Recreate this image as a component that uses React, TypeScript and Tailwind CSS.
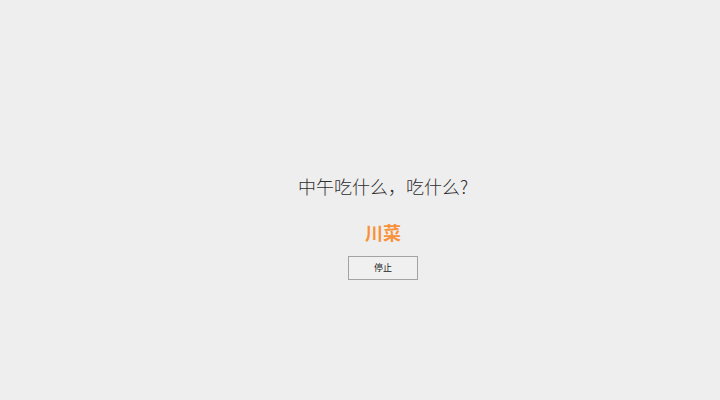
export default function App() {
  return (
    <div
      className="flex h-[400px] w-[720px] flex-col items-center bg-[#eeeeee] pl-[46px] pt-[174px] text-[#333333]"
      style={{ fontFamily: '"Noto Sans CJK SC", "Noto Sans", sans-serif' }}
    >
      <h1 className="text-[18px] font-light leading-[24px] text-[#2e2e2e]">中午吃什么，吃什么?</h1>
      <div className="mt-[22px] text-[18px] font-bold leading-[24px] text-[#f7923a]">川菜</div>
      <button className="mt-[12px] flex h-[24px] w-[70px] items-center justify-center border border-[#a3a3a3] bg-[#f0f0f0] text-[9px] text-[#222222]">
        停止
      </button>
    </div>
  );
}
